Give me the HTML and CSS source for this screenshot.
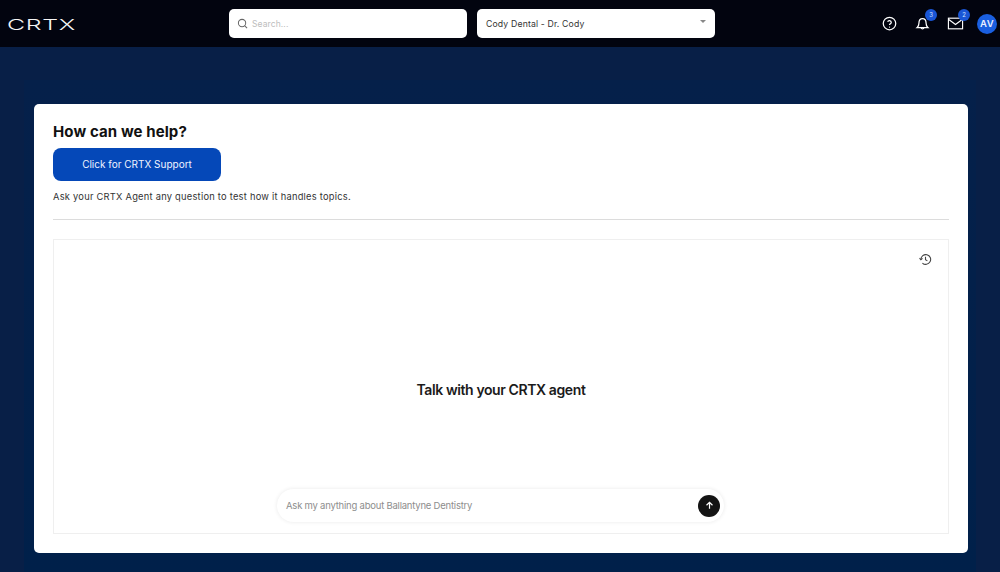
FILE: index.html
```html
<!DOCTYPE html>
<html lang="en">
<head>
<meta charset="utf-8">
<title>CRTX Support</title>
<link rel="stylesheet" href="styles.css">
</head>
<body>
<header class="topbar">
  <a class="logo"><span class="logo-text">CRTX</span></a>
  <div class="field search">
    <svg class="search-icon" viewBox="0 0 24 24"><circle cx="11" cy="11" r="8"/><path d="M17 17l5 5"/></svg>
    <span class="placeholder">Search...</span>
  </div>
  <div class="field select">
    <span class="select-value">Cody Dental - Dr. Cody</span>
    <span class="caret"></span>
  </div>
  <div class="actions">
    <svg class="action help" viewBox="0 0 24 24"><circle cx="12" cy="12" r="10"/><path d="M9 9.2a3 3 0 0 1 5.8 1c0 2-2.8 2.4-2.8 4.2"/><circle class="dot" cx="12" cy="17.6" r="1"/></svg>
    <div class="notify bell">
      <svg class="action" viewBox="0 0 24 24"><path d="M3.5 18.5c2-1.6 2.8-3.5 2.8-7.2C6.300 7.300 8.600 4 12 4s5.700 3.300 5.700 7.300c0 3.700.8 5.600 2.800 7.200z"/><path d="M9.800 19a2.300 2.300 0 0 0 4.400 0"/></svg>
      <span class="badge">3</span>
    </div>
    <div class="notify mail">
      <svg class="action" viewBox="0 0 24 24"><rect x="2" y="4.500" width="20" height="15"/><path d="M2 6l10 7.500L22 6"/></svg>
      <span class="badge">2</span>
    </div>
    <span class="avatar">AV</span>
  </div>
</header>
<main class="page">
  <div class="panel">
    <section class="card">
      <h1 class="title">How can we help?</h1>
      <button class="support" type="button">Click for CRTX Support</button>
      <p class="intro">Ask your CRTX Agent any question to test how it handles topics.</p>
      <hr class="rule">
      <div class="chat">
        <div class="chat-top">
          <svg class="history" viewBox="0 0 24 24"><path d="M3.500 12a9 9 0 1 1 2.800 6.500"/><path d="M1 9.500l2.500 3 3-2.500"/><path d="M12 7v5.500l3.500 2"/></svg>
        </div>
        <div class="chat-mid"><h2 class="agent">Talk with your CRTX agent</h2></div>
        <div class="composer">
          <span class="ask">Ask my anything about Ballantyne Dentistry</span>
          <span class="send"><svg viewBox="0 0 24 24"><path d="M12 19V5M5.500 11.500L12 5l6.500 6.500"/></svg></span>
        </div>
      </div>
    </section>
  </div>
</main>
</body>
</html>
```
FILE: styles.css
```css
* { box-sizing: border-box; }
html, body { margin: 0; height: 100%; }
body {
  width: 1000px;
  height: 572px;
  overflow: hidden;
  background: #081f47;
  font-family: "Inter", "Liberation Sans", sans-serif;
}
.topbar {
  height: 47px;
  background: #02040f;
  display: flex;
  align-items: center;
  padding: 0 3px 0 7px;
}
.logo { width: 222px; display: block; color: #f6f6f6; }
.logo-text {
  display: inline-block;
  font: 300 15px/1 "Inter", sans-serif;
  letter-spacing: .4px;
  transform: scaleX(1.66);
  transform-origin: left center;
}
.field {
  width: 238px;
  height: 29px;
  background: #fff;
  border-radius: 5px;
  display: flex;
  align-items: center;
}
.search { padding-left: 8px; gap: 4px; }
.search-icon { width: 11px; height: 11px; fill: none; stroke: #666; stroke-width: 2.200; }
.placeholder { font-size: 8.500px; color: #bdbdbd; letter-spacing: .1px; }
.select { margin-left: 10px; padding: 0 9px; justify-content: space-between; }
.select-value { font-size: 8.700px; color: #333; letter-spacing: .15px; }
.caret {
  width: 0; height: 0;
  margin: 0 0 4px;
  border-left: 3px solid transparent;
  border-right: 3px solid transparent;
  border-top: 3px solid #888;
}
.actions { margin-left: auto; display: flex; align-items: center; }
.action { width: 15px; height: 15px; fill: none; stroke: #fff; stroke-width: 2; display: block; }
.help { margin-right: 18px; width: 15px; height: 15px; }
.help .dot { fill: #fff; stroke: none; }
.notify { position: relative; }
.bell { margin-right: 17px; }
.mail { margin-right: 13px; }
.mail .action { width: 17px; height: 17px; stroke-width: 1.600; }
.badge {
  position: absolute;
  top: -7px;
  left: 10px;
  width: 12px;
  height: 12px;
  border-radius: 50%;
  background: #1a56d6;
  color: #cfe0ff;
  font-size: 6px;
  line-height: 12px;
  text-align: center;
}
.mail .badge { left: 11px; top: -6px; }
.avatar {
  width: 20px;
  height: 20px;
  border-radius: 50%;
  background: #1a5fe0;
  color: #e9f0ff;
  font-size: 9.500px;
  font-weight: 600;
  line-height: 20px;
  text-align: center;
  letter-spacing: .5px;
}
.page { padding: 33px 24px 0; }
.panel {
  height: 492px;
  padding: 24px 8px 0 10px;
  background: linear-gradient(#05204a, #00204a);
}
.card {
  width: 934px;
  height: 449px;
  background: #fff;
  border-radius: 5px;
  padding: 18px 19px 19px;
  display: flex;
  flex-direction: column;
}
.title {
  margin: 0;
  font-size: 15px;
  line-height: 19px;
  font-weight: 700;
  color: #111;
  letter-spacing: .1px;
}
.support {
  margin-top: 7px;
  width: 168px;
  height: 33px;
  border: 0;
  border-radius: 8px;
  background: #0548b8;
  color: #f0f4ff;
  font: 400 10px/31px "Inter", sans-serif;
  padding: 0;
}
.intro {
  margin: 9px 0 0;
  font-size: 9.300px;
  line-height: 14px;
  color: #333;
  letter-spacing: .25px;
}
.rule { margin: 15px 0 0; border: 0; border-top: 1px solid #dcdcdc; }
.chat {
  margin-top: 19px;
  flex: 1;
  border: 1px solid #efefef;
  display: flex;
  flex-direction: column;
  padding: 13px 0 11px;
}
.chat-top { display: flex; justify-content: flex-end; padding-right: 16px; }
.history { width: 13px; height: 13px; fill: none; stroke: #444; stroke-width: 2; display: block; }
.chat-mid { flex: 1; display: flex; align-items: center; justify-content: center; padding-top: 24px; }
.agent { margin: 0; font-size: 14px; font-weight: 600; color: #1b1b1b; letter-spacing: -.4px; }
.composer {
  margin-left: 223px;
  width: 447px;
  height: 33px;
  border-radius: 17px;
  background: #fff;
  box-shadow: 0 0 4px rgba(0, 0, 0, .09);
  display: flex;
  align-items: center;
  justify-content: space-between;
  padding: 0 4px 0 9px;
}
.ask { font-size: 9.500px; color: #8d8d8d; letter-spacing: -.22px; margin-bottom: 1px; }
.send {
  width: 22px;
  height: 22px;
  border-radius: 50%;
  background: #141414;
  display: flex;
  align-items: center;
  justify-content: center;
}
.send svg { width: 11px; height: 11px; fill: none; stroke: #fff; stroke-width: 2.600; }
```
